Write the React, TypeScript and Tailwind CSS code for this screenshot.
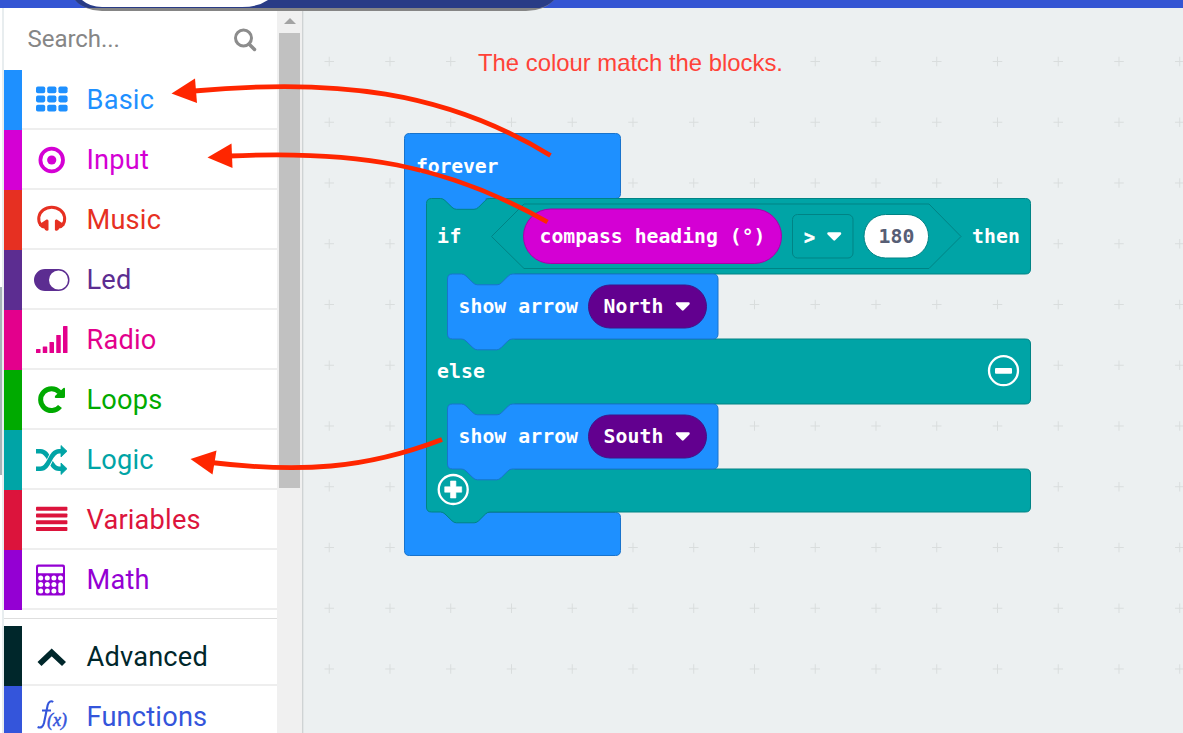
import type { ReactNode } from "react";

type Category = { name: string; bar: string; text: string; icon: ReactNode };

const range = (n: number) => Array.from({ length: n }, (_, i) => i);

const GridIcon = () => (
  <>
    {range(9).map((i) => (
      <rect key={i} x={4 + (i % 3) * 11.2} y={6.5 + Math.floor(i / 3) * 9.1} width="9.2" height="6.8" rx="1.8" />
    ))}
  </>
);

const TargetIcon = () => (
  <>
    <circle cx="19.7" cy="20" r="11.3" fill="none" stroke="currentColor" strokeWidth="3.8" />
    <circle cx="19.7" cy="20" r="4.6" />
  </>
);

const HeadphonesIcon = () => (
  <>
    <path d="M8.800 25A13 11.500 0 1 1 30.600 25" fill="none" stroke="currentColor" strokeWidth="3" />
    <path d="M7 24.500L14.500 19.500Q16.500 19 16.500 21V30Q16.200 31 14.600 30.800Q12.800 30.300 12.300 28.500Q9.500 28.500 7 25.500Z" />
    <path d="M32.400 24.500L24.900 19.500Q22.900 19 22.900 21V30Q23.200 31 24.800 30.800Q26.600 30.300 27.100 28.500Q29.900 28.500 32.400 25.500Z" />
  </>
);

const ToggleIcon = () => (
  <path fillRule="evenodd" d="M13 9H26.500A11 11 0 0 1 26.500 31H13A11 11 0 0 1 13 9ZM26.500 10.500A9.500 9.500 0 0 0 26.500 29.500A9.500 9.500 0 0 0 26.500 10.500Z" />
);

const SignalIcon = () => (
  <>
    {[4, 6.5, 11, 18, 27].map((h, i) => (
      <rect key={i} x={4 + i * 6.75} y={33 - h} width="4.500" height={h} rx="0.600" />
    ))}
  </>
);

const RepeatIcon = () => (
  <>
    <path d="M27.500 12.200A10.900 10.900 0 1 0 28 26.500" fill="none" stroke="currentColor" strokeWidth="5" />
    <path d="M33 8.800V16.500Q33 18 31.500 18H23.500Q22.300 17.500 23 16L31.500 8Q33 7.500 33 8.800Z" />
  </>
);

const ShuffleIcon = () => (
  <>
    <path d="M4 11.200H8.500C18 11.200 17.500 28.700 27 28.700H30" fill="none" stroke="currentColor" strokeWidth="4.500" />
    <path d="M10 28.500C18.500 27 17.500 12.500 25.500 11.300" fill="none" stroke="#fff" strokeWidth="6" />
    <path d="M4 28.700H8.500C18 28.700 17.500 11.200 27 11.200H30" fill="none" stroke="currentColor" strokeWidth="4.500" />
    <path d="M29 5.500L35 11.200L29 17ZM29 23L35 28.700L29 34.500Z" stroke="currentColor" strokeWidth="0.800" strokeLinejoin="round" />
  </>
);

const LinesIcon = () => (
  <>
    {range(4).map((i) => (
      <rect key={i} x="4" y={6.7 + i * 6.75} width="31.400" height="4.100" rx="0.800" />
    ))}
  </>
);

const CalculatorIcon = () => (
  <>
    <rect x="4" y="4.500" width="29" height="31" rx="2" />
    <rect x="6" y="6.800" width="25" height="6.500" rx="0.800" fill="#fff" />
    {range(12).map((i) =>
      i === 7 || i === 11 ? null : (
        <circle key={i} cx={8.7 + (i % 4) * 6.6} cy={18 + Math.floor(i / 4) * 6.5} r="2.500" fill="#fff" />
      )
    )}
    <rect x="26.300" y="22.300" width="4.500" height="11" rx="2" fill="#fff" />
  </>
);

const ChevronIcon = () => (
  <path d="M7.500 28L19.700 16.500L32 28" fill="none" stroke="currentColor" strokeWidth="5.800" />
);

const FunctionIcon = () => (
  <>
    <path d="M21.200 6C19 4.300 16.700 5.500 15.700 9L12 27Q10.500 33 5.600 31M10 14.500H19" fill="none" stroke="currentColor" strokeWidth="2.100" />
    <text x="15" y="30" fontSize="18" className="italic [font-family:'Liberation_Serif',serif]" stroke="currentColor" strokeWidth="0.500" textLength="20" lengthAdjust="spacingAndGlyphs">(x)</text>
  </>
);

const categories: Category[] = [
  { name: "Basic", bar: "bg-[#1e90ff]", text: "text-[#1e90ff]", icon: <GridIcon /> },
  { name: "Input", bar: "bg-[#d400d4]", text: "text-[#d400d4]", icon: <TargetIcon /> },
  { name: "Music", bar: "bg-[#e63022]", text: "text-[#e63022]", icon: <HeadphonesIcon /> },
  { name: "Led", bar: "bg-[#5c2d91]", text: "text-[#5c2d91]", icon: <ToggleIcon /> },
  { name: "Radio", bar: "bg-[#e3008c]", text: "text-[#e3008c]", icon: <SignalIcon /> },
  { name: "Loops", bar: "bg-[#00aa00]", text: "text-[#00aa00]", icon: <RepeatIcon /> },
  { name: "Logic", bar: "bg-[#00a4a6]", text: "text-[#00a4a6]", icon: <ShuffleIcon /> },
  { name: "Variables", bar: "bg-[#dc143c]", text: "text-[#dc143c]", icon: <LinesIcon /> },
  { name: "Math", bar: "bg-[#9400d3]", text: "text-[#9400d3]", icon: <CalculatorIcon /> },
];

const advanced: Category[] = [
  { name: "Advanced", bar: "bg-[#00272b]", text: "text-[#00272b]", icon: <ChevronIcon /> },
  { name: "Functions", bar: "bg-[#3455db]", text: "text-[#3455db]", icon: <FunctionIcon /> },
];

function Row({ name, bar, text, icon, labelPad = "pt-px" }: Category & { labelPad?: string }) {
  return (
    <div className={`flex h-[60px] shrink-0 ${text}`}>
      <div className={`w-[18px] ${bar}`} />
      <div className="flex flex-1 items-center border-b-2 border-[#eeeeee] pl-2.5 pt-0.5">
        <svg width="40" height="40" viewBox="0 0 40 40" fill="currentColor" className="shrink-0">
          {icon}
        </svg>
        <span className={`ml-[14.5px] whitespace-nowrap text-[27.2px] leading-[27px] tracking-[0.2px] ${labelPad}`}>{name}</span>
      </div>
    </div>
  );
}

function Sidebar() {
  return (
    <aside className="flex h-[725px] w-[302px] shrink-0 overflow-hidden bg-white [font-family:Roboto,sans-serif]">
      <div className="flex w-1 flex-col border-r-2 border-[#e8edef] pt-[279px]">
        <div className="h-[188px] bg-[#a7b3b8]" />
      </div>
      <div className="flex w-[273px] flex-col">
        <div className="flex h-[62px] shrink-0 items-center justify-between pl-[23.5px] pr-[19px]">
          <span className="text-[24px] leading-8 tracking-[-0.05px] text-[#868686]">Search...</span>
          <svg width="26" height="26" viewBox="0 0 26 26" fill="none" stroke="#8c8c8c" strokeWidth="3" className="mt-0.5">
            <circle cx="11.500" cy="11" r="8" />
            <path d="M17 17L22.500 22.500" strokeLinecap="round" strokeWidth="3.500" />
          </svg>
        </div>
        {categories.map((c) => (
          <Row key={c.name} {...c} />
        ))}
        <div className="mb-[7px] h-[9px] shrink-0 border-b border-[#dedede]" />
        {advanced.map((c) => (
          <Row key={c.name} {...c} labelPad="pt-[3px]" />
        ))}
      </div>
      <div className="flex w-[25px] flex-col items-center bg-[#f0f0f0] pt-[10px] pr-0.5 pl-0.5">
        <svg width="12" height="6" viewBox="0 0 12 6" className="mb-[9px] shrink-0">
          <path d="M6 0L12 6H0Z" fill="#a3a3a3" />
        </svg>
        <div className="h-[455px] w-[21px] bg-[#c1c1c1]" />
      </div>
    </aside>
  );
}

function ShowArrow({ y, label }: { y: number; label: string }) {
  return (
    <g>
      <rect x="446.500" y={y - 1} width="68" height="68" fill="#00a4a6" />
      <path
        d={`M447.500 ${y + 5}q0-5 5-5h9q2.500 0 4.500 2l7 6.800q2 2 4.500 2h19.500q2.500 0 4.500-2l6.800-6.800q2-2 4.500-2H713q5 0 5 5v55q0 5-5 5H512.300q-2.500 0-4.500 2l-6.800 6.800q-2 2-4.500 2H477.500q-2.500 0-4.500-2l-7-6.800q-2-2-4.500-2h-9q-5 0-5-5Z`}
        fill="#1e90ff"
        stroke="#1873cc"
      />
      <text x="458.500" y={y + 39.3} textLength="119.500">show arrow</text>
      <rect x="588.500" y={y + 11} width="118" height="43" rx="21.500" fill="#62008f" stroke="#3f1588" />
      <text x="603.500" y={y + 39.3} textLength="60">{label}</text>
      <path d={`M677 ${y + 29.5}h11.500l-5.750 5.800z`} fill="#fff" stroke="#fff" strokeWidth="2.500" strokeLinejoin="round" />
    </g>
  );
}

function Workspace() {
  return (
    <svg
      width="881"
      height="725"
      viewBox="302 8 881 725"
      className="block shrink-0 text-[19.800px] font-bold [font-family:'DejaVu_Sans_Mono',monospace]"
      fill="#fff"
    >
      <rect x="302" y="8" width="881" height="725" fill="#ecf0f1" />
      <rect x="302" y="11" width="1" height="722" fill="#cfd3d4" />
      <rect x="303" y="11" width="1" height="722" fill="#e2e6e7" />
      {range(15).flatMap((i) =>
        range(11).map((j) => (
          <path key={`${i}-${j}`} d={`M${324.5 + i * 60.75} ${61.5 + j * 60.75}h9.500m-4.750-4.750v9.500`} stroke="#d9dddd" strokeWidth="1" fill="none" />
        ))
      )}
      <text x="478" y="71.300" fill="#ff4238" fontSize="24" fontWeight="400" textLength="305" lengthAdjust="spacingAndGlyphs" className="[font-family:'Liberation_Sans',sans-serif]">The colour match the blocks.</text>
      <path d="M404.500 138.500q0-5 5-5H615.500q5 0 5 5V193.500q0 5-5 5H486V512.500H615.500q5 0 5 5V550.500q0 5-5 5H409.500q-5 0-5-5Z" fill="#1e90ff" stroke="#1873cc" />
      <path
        d="M426.500 203.500q0-5 5-5h9q2.500 0 4.500 2l7 6.800q2 2 4.500 2h17.500q2.500 0 4.500-2l6.800-6.800q2-2 4.500-2H1025.500q5 0 5 5V269q0 5-5 5H447.500V339H1025.500q5 0 5 5V399q0 5-5 5H447.500V469H1025.500q5 0 5 5V507q0 5-5 5H490q-2.500 0-4.500 2l-6.800 6.800q-2 2-4.500 2H456.500q-2.500 0-4.500-2l-7-6.800q-2-2-4.500-2h-9q-5 0-5-5Z"
        fill="#00a4a6"
        stroke="#008385"
      />
      <path d="M491.500 236.500L524 204H929L961 236.500L929 268.500H524Z" fill="#00a4a6" stroke="#008385" />
      <rect x="523.500" y="209" width="258" height="54.500" rx="27.250" fill="#d400d4" stroke="#a700a9" />
      <rect x="792.500" y="214.500" width="60.500" height="43.500" rx="5" fill="#00a4a6" stroke="#008385" />
      <rect x="864" y="214.500" width="64.500" height="43.500" rx="21.500" stroke="#008385" />
      <ShowArrow y={274} label="North" />
      <ShowArrow y={404} label="South" />
      <text x="416" y="173" textLength="82.500">forever</text>
      <text x="437" y="243.300" textLength="24.500">if</text>
      <text x="539.500" y="243.300" textLength="226">compass heading (°)</text>
      <text x="804" y="243.800" textLength="11" lengthAdjust="spacingAndGlyphs" stroke="#fff" strokeWidth="0.500">&gt;</text>
      <path d="M828.500 233.500h11.500l-5.750 5.800z" stroke="#fff" strokeWidth="2.500" strokeLinejoin="round" />
      <text x="878.500" y="243.300" textLength="36" fill="#575e75">180</text>
      <text x="972" y="243.300" textLength="48">then</text>
      <text x="437" y="378.300" textLength="48">else</text>
      <circle cx="1003.500" cy="370.700" r="14.500" fill="none" stroke="#fff" strokeWidth="2.300" />
      <rect x="995" y="368" width="17" height="5.700" rx="1" />
      <circle cx="453.200" cy="489.500" r="14.500" fill="none" stroke="#fff" strokeWidth="2.300" />
      <path d="M450.500 481h5.400v5.800h5.800v5.400h-5.800v5.800h-5.400v-5.800h-5.800v-5.400h5.800z" stroke="#fff" strokeWidth="0.600" strokeLinejoin="round" />
    </svg>
  );
}

function Annotations() {
  return (
    <svg width="1183" height="733" viewBox="0 0 1183 733" className="pointer-events-none absolute inset-0" fill="#ff2600">
      <g fill="none" stroke="#ff2600" strokeWidth="4.800">
        <path d="M550.500 155.500C445 91 335 78 194 91" />
        <path d="M547.500 222C445 164 355 150 229 156" />
        <path d="M442 439.500C365 469 300 473 211 462.500" />
      </g>
      <path d="M171.500 93.500L195 78.500L197 103Z" />
      <path d="M207.500 157.500L231.500 143.500L232.500 168Z" />
      <path d="M190.500 459L216.500 450.500L212.500 474.500Z" />
    </svg>
  );
}

export default function App() {
  return (
    <div className="relative h-[733px] w-[1183px] overflow-hidden bg-[#ecf0f1]">
      <header className="h-2 bg-[#3455d3]" />
      <main className="flex">
        <Sidebar />
        <Workspace />
      </main>
      <svg width="490" height="12" viewBox="70 0 490 12" className="absolute left-[70px] top-0">
        <path d="M75 0Q85 11 102 11H526Q544 11 554 0Z" fill="#858585" />
        <path d="M75 0Q80 6 88 8H540Q548 6 554 0Z" fill="#293c86" />
        <path d="M82 0Q90 7 102 7H242Q258 7 268 0Z" fill="#fff" />
      </svg>
      <Annotations />
    </div>
  );
}
